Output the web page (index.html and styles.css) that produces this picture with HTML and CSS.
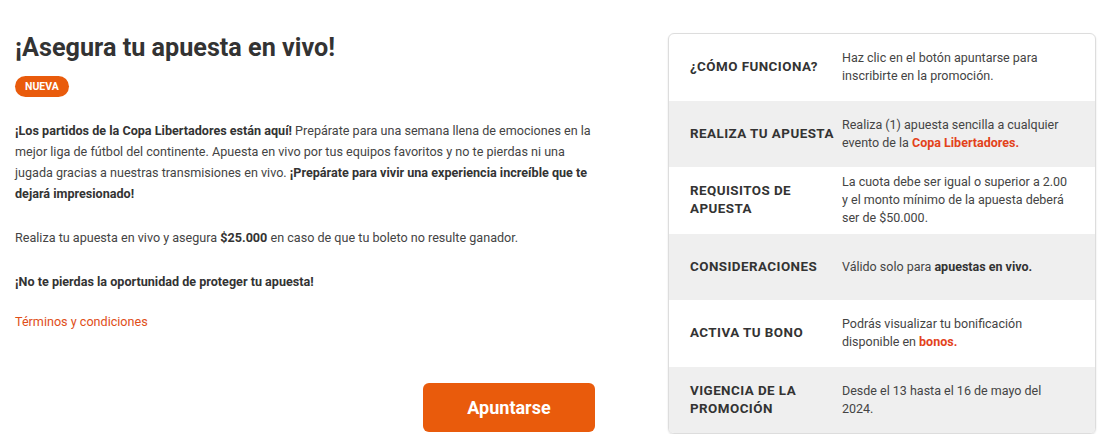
FILE: index.html
```html
<!DOCTYPE html>
<html lang="es">
<head>
    <meta charset="UTF-8">
    <meta name="viewport" content="width=device-width, initial-scale=1.0">
    <title>Asegura tu apuesta en vivo</title>
    <link rel="stylesheet" href="styles.css">
</head>
<body>

    <div class="page">
        <div class="promo">
            <h1>¡Asegura tu apuesta en vivo!</h1>
            <span class="badge">NUEVA</span>

            <p><b>¡Los partidos de la Copa Libertadores están aquí!</b> Prepárate para una semana llena de emociones en la mejor liga de fútbol del continente. Apuesta en vivo por tus equipos favoritos y no te pierdas ni una jugada gracias a nuestras transmisiones en vivo. <b>¡Prepárate para vivir una experiencia increíble que te dejará impresionado!</b></p>

            <p>Realiza tu apuesta en vivo y asegura <b>$25.000</b> en caso de que tu boleto no resulte ganador.</p>

            <p class="last"><b>¡No te pierdas la oportunidad de proteger tu apuesta!</b></p>

            <a class="terms" href="#">Términos y condiciones</a>

            <div class="actions">
                <button>Apuntarse</button>
            </div>
        </div>

        <div class="card">
            <div class="row">
                <div class="label">¿Cómo funciona?</div>
                <div class="value">Haz clic en el botón apuntarse para inscribirte en la promoción.</div>
            </div>
            <div class="row alt">
                <div class="label">Realiza tu apuesta</div>
                <div class="value">Realiza (1) apuesta sencilla a cualquier evento de la <span class="hl">Copa Libertadores.</span></div>
            </div>
            <div class="row">
                <div class="label">Requisitos de apuesta</div>
                <div class="value">La cuota debe ser igual o superior a 2.00 y el monto mínimo de la apuesta deberá ser de $50.000.</div>
            </div>
            <div class="row alt">
                <div class="label">Consideraciones</div>
                <div class="value">Válido solo para <b>apuestas en vivo.</b></div>
            </div>
            <div class="row">
                <div class="label">Activa tu bono</div>
                <div class="value">Podrás visualizar tu bonificación disponible en <span class="hl">bonos.</span></div>
            </div>
            <div class="row alt">
                <div class="label">Vigencia de la promoción</div>
                <div class="value">Desde el 13 hasta el 16 de mayo del 2024.</div>
            </div>
        </div>
    </div>

</body>
</html>
```

FILE: styles.css
```css
body {
    font-family: Roboto, 'Noto Sans', sans-serif;
    background-color: #fff;
    margin: 0;
    color: #444;
}

.page {
    display: flex;
    gap: 73px;
    padding: 0 10px 0 15px;
}

.promo {
    width: 580px;
    padding-top: 33px;
}

.promo h1 {
    font-size: 25.2px;
    font-weight: 700;
    color: #333;
    margin: 0;
    line-height: 30px;
}

.badge {
    display: inline-block;
    margin-top: 13px;
    background-color: #e95b0c;
    color: #fff;
    font-size: 10.5px;
    font-weight: 700;
    line-height: 21px;
    padding: 0 10px;
    border-radius: 11px;
}

.promo p {
    font-size: 12.6px;
    line-height: 21px;
    margin: 23px 0 22px;
}

.promo p.last {
    margin-bottom: 19px;
}

.promo p b {
    color: #333;
}

.terms {
    display: block;
    font-size: 12.6px;
    line-height: 21px;
    color: #e04e18;
    text-decoration: none;
}

.actions {
    display: flex;
    justify-content: flex-end;
    margin-top: 51px;
}

button {
    width: 172px;
    height: 49px;
    background-color: #e95b0c;
    color: #fff;
    border: none;
    border-radius: 6px;
    font-family: inherit;
    font-size: 18px;
    font-weight: 700;
    cursor: pointer;
}

.card {
    width: 426px;
    margin-top: 33px;
    border: 1px solid #ddd;
    border-radius: 6px;
    overflow: hidden;
    box-shadow: 0 1px 2px rgba(0, 0, 0, 0.12);
}

.row {
    display: grid;
    grid-template-columns: 152px 1fr;
    align-items: center;
    height: 66.5px;
    padding: 0 20px 0 21px;
}

.row.alt {
    background-color: #efefef;
}

.label {
    font-size: 13.4px;
    font-weight: 700;
    text-transform: uppercase;
    letter-spacing: 0.45px;
    line-height: 18px;
    color: #333;
}

.value {
    font-size: 12.5px;
    line-height: 18px;
    color: #444;
}

.value b {
    color: #333;
}

.hl {
    color: #e3421a;
    font-weight: 700;
}
```
